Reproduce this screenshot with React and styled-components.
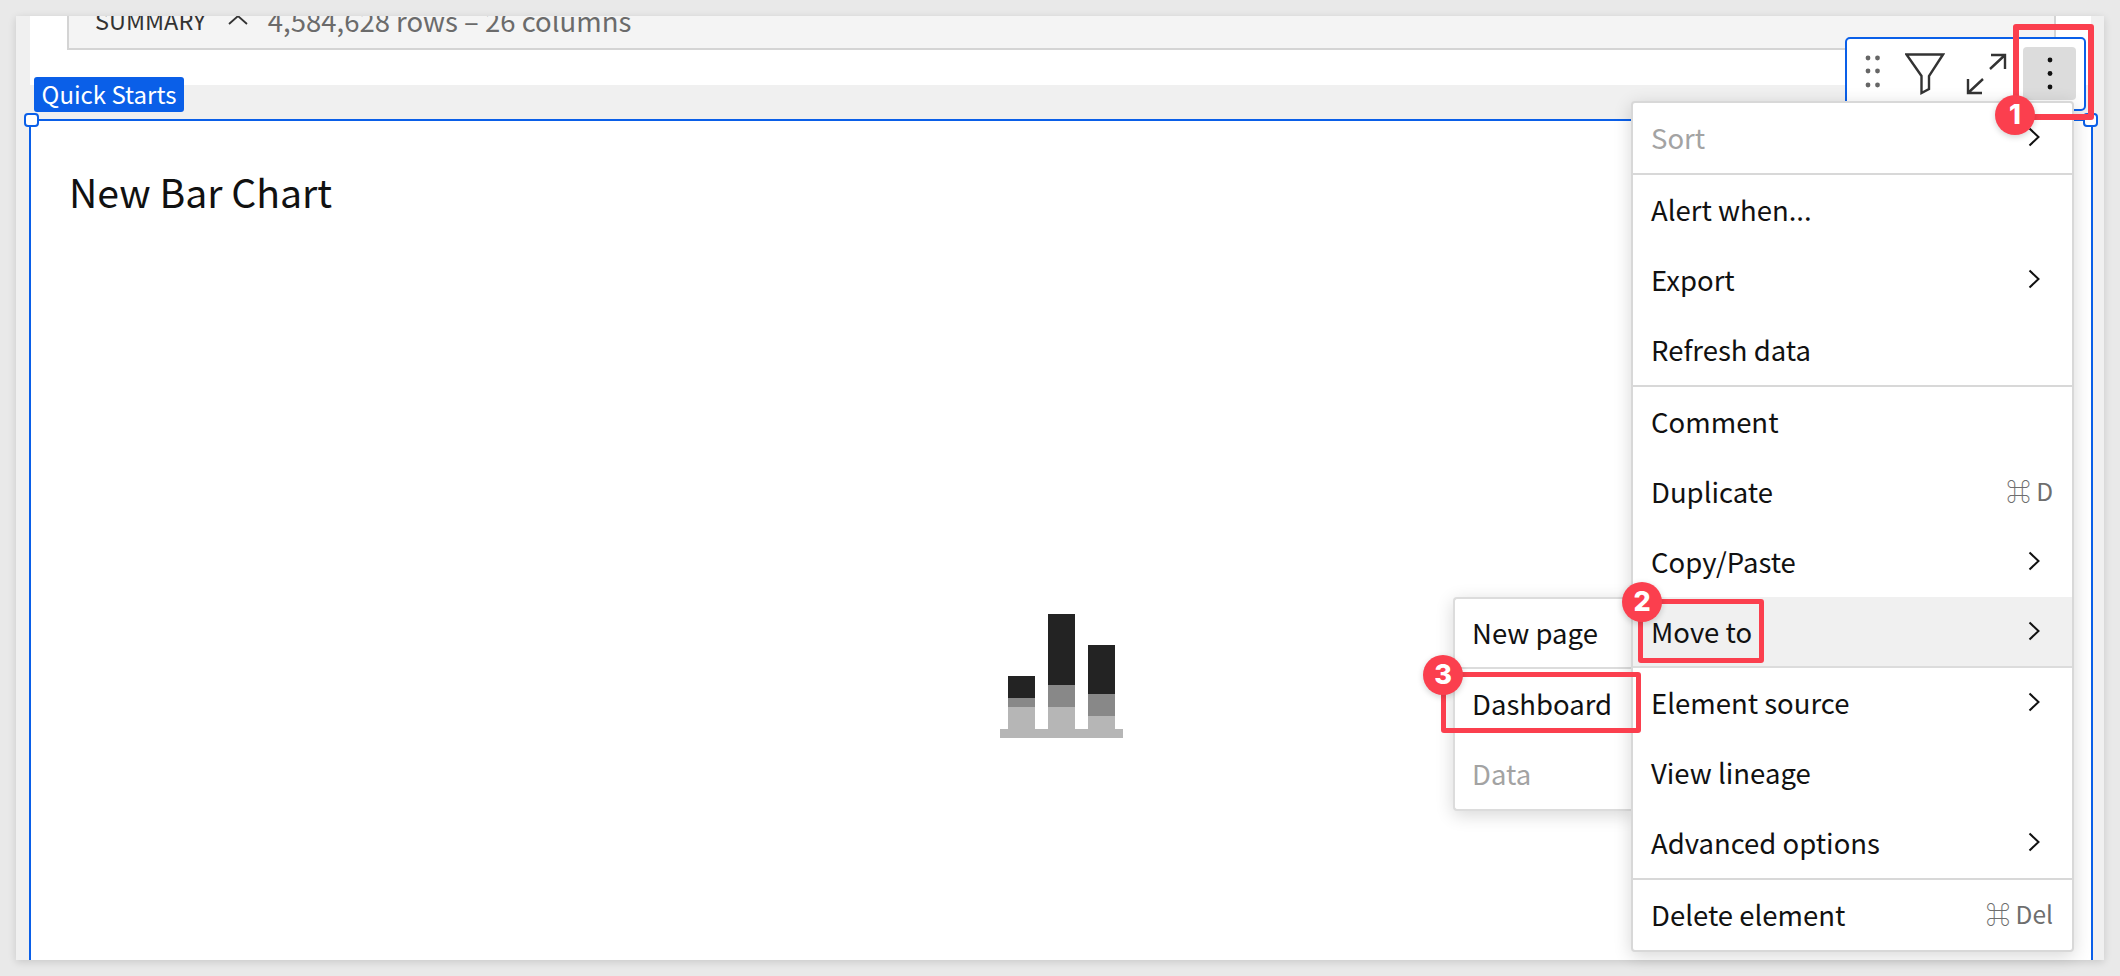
import React from "react";
import styled, { createGlobalStyle } from "styled-components";

const FONT = `"Noto Sans CJK JP", "Noto Sans", "Liberation Sans", sans-serif`;
const RED = "#fb3f4e";
const BLUE = "#0a5fe8";

const Global = createGlobalStyle`
  html, body { margin: 0; padding: 0; background: #e9e9e9; }
  body { font-family: ${FONT}; overflow: hidden; }
  * { box-sizing: border-box; }
`;

const Page = styled.div`
  width: 2120px;
  height: 976px;
  padding: 16px;
`;
const Frame = styled.main`
  position: relative;
  width: 2088px;
  height: 944px;
  background: #f0f0f0;
  box-shadow: 0 2px 8px rgba(0, 0, 0, 0.14);
  display: flex;
  flex-direction: column;
`;
const TopSection = styled.section`
  height: 69px;
  margin: 0 13px 0 14px;
  padding-left: 37px;
  background: #fff;
  flex: none;
`;
const SummaryBar = styled.div`
  width: 1989px;
  height: 34px;
  background: #f4f4f4;
  border-left: 2px solid #d4d4d4;
  border-right: 2px solid #d4d4d4;
  border-bottom: 2px solid #d4d4d4;
  overflow: hidden;
  display: flex;
  align-items: center;
  padding-left: 26px;
  font-size: 24px;
  line-height: 30px;
`;
const SummaryInner = styled.div`
  display: flex;
  align-items: center;
  margin-top: -25px;
`;
const SummaryLabel = styled.span`
  color: #333;
  font-size: 23.5px;
`;
const SummaryChevron = styled.svg`
  width: 20px;
  height: 10px;
  margin: 0 20px 0 22px;
  flex: none;
`;
const SummaryMeta = styled.span`
  color: #6b6b6b;
  font-size: 27.5px;
`;
const TagBand = styled.div`
  height: 34px;
  flex: none;
  padding-left: 18px;
`;
const Tag = styled.div`
  width: 150px;
  height: 35px;
  margin-top: -8px;
  background: ${BLUE};
  color: #fff;
  border-radius: 3px;
  font-size: 24px;
  line-height: 33px;
  text-align: center;
  position: relative;
`;
const ChartPanel = styled.section`
  position: relative;
  flex: 1;
  margin-left: 13px;
  width: 2064px;
  background: #fff;
  border: 2px solid ${BLUE};
  border-bottom: 0;
  display: flex;
  flex-direction: column;
`;
const Handle = styled.span`
  position: absolute;
  top: -8px;
  ${(p) => (p.$side === "left" ? "left: -7px;" : "right: -7px;")}
  width: 15px;
  height: 14px;
  background: #fff;
  border: 2px solid ${BLUE};
  border-radius: 4px;
`;
const Title = styled.h2`
  margin: 46px 0 0 38px;
  font-weight: 400;
  font-size: 39.2px;
  line-height: 48px;
  color: #111;
`;
const EmptyChart = styled.svg`
  align-self: center;
  width: 123px;
  height: 124px;
  margin-top: 399px;
  flex: none;
`;
const Toolbar = styled.div`
  position: absolute;
  left: 1829px;
  top: 21px;
  width: 241px;
  height: 74px;
  background: #fff;
  border: 2px solid ${BLUE};
  border-radius: 5px;
  display: flex;
  align-items: flex-start;
  padding: 8px 8px 0 0;
`;
const ToolIcon = styled.svg`
  flex: none;
  margin-top: ${(p) => p.$mt || 0}px;
  margin-left: ${(p) => p.$ml || 0}px;
`;
const KebabButton = styled.div`
  margin-left: auto;
  width: 53px;
  height: 53px;
  background: #dcdcdc;
  border-radius: 4px;
  display: flex;
  align-items: center;
  justify-content: center;
`;
const Menu = styled.div`
  position: absolute;
  left: 1615px;
  top: 85px;
  width: 443px;
  background: #fff;
  border: 2px solid #d8d8d8;
  border-radius: 4px;
  box-shadow: 0 4px 18px rgba(0, 0, 0, 0.16);
  color: #111;
`;
const SubMenu = styled.div`
  position: absolute;
  left: 1437px;
  top: 581px;
  width: 180px;
  background: #fff;
  border: 2px solid #dcdcdc;
  border-right: 0;
  border-radius: 4px 0 0 4px;
  box-shadow: 0 4px 18px rgba(0, 0, 0, 0.16);
`;
const Group = styled.div`
  &:not(:last-child) {
    border-bottom: 2px solid #d8d8d8;
  }
`;
const Row = styled.div`
  height: ${(p) => p.$h || 70}px;
  padding: 0 20px 2px ${(p) => p.$pl ?? 18}px;
  display: flex;
  align-items: center;
  justify-content: space-between;
  font-size: 27.5px;
  line-height: 36px;
  color: ${(p) => (p.$disabled ? "#a3a3a3" : "#111")};
  background: ${(p) => (p.$active ? "#f0f0f0" : "transparent")};
  border-bottom: ${(p) => (p.$rule ? "2px solid #dcdcdc" : "0")};
`;
const Shortcut = styled.span`
  font-family: ${FONT};
  font-size: 24.5px;
  color: #6e6e6e;
  margin-right: -1px;
`;
const Chevron = styled.svg`
  width: 12px;
  height: 20px;
  flex: none;
  margin-right: 12px;
`;
const Callout = styled.div`
  position: absolute;
  left: ${(p) => p.$x - 16}px;
  top: ${(p) => p.$y - 16}px;
  width: ${(p) => p.$w}px;
  height: ${(p) => p.$h}px;
  border: ${(p) => p.$t || 5}px solid ${RED};
  border-radius: 3px;
`;
const Badge = styled.div`
  position: absolute;
  left: ${(p) => p.$cx - 36}px;
  top: ${(p) => p.$cy - 36}px;
  width: 40px;
  height: 40px;
  border-radius: 50%;
  background: ${RED};
  color: #fff;
  font-family: "Inter", "Liberation Sans", sans-serif;
  font-size: 27px;
  font-weight: 800;
  line-height: 40px;
  text-align: center;
  box-shadow: 0 2px 6px rgba(0, 0, 0, 0.18);
`;

const Arrow = () => (
  <Chevron viewBox="0 0 12 20">
    <path d="M1.5 1.5 L10.5 10 L1.5 18.5" fill="none" stroke="#111" strokeWidth="2" />
  </Chevron>
);

const Item = ({ label, arrow, shortcut, ...rest }) => (
  <Row {...rest}>
    <span>{label}</span>
    {arrow && <Arrow />}
    {shortcut && <Shortcut>{shortcut}</Shortcut>}
  </Row>
);

export default function App() {
  return (
    <Page>
      <Global />
      <Frame>
        <TopSection>
          <SummaryBar>
            <SummaryInner>
              <SummaryLabel>SUMMARY</SummaryLabel>
              <SummaryChevron viewBox="0 0 20 10">
                <path d="M1 9 L10 1 L19 9" fill="none" stroke="#333" strokeWidth="1.8" />
              </SummaryChevron>
              <SummaryMeta>4,584,628 rows – 26 columns</SummaryMeta>
            </SummaryInner>
          </SummaryBar>
        </TopSection>
        <TagBand>
          <Tag>Quick Starts</Tag>
        </TagBand>
        <ChartPanel>
          <Handle $side="left" />
          <Handle $side="right" />
          <Title>New Bar Chart</Title>
          <EmptyChart viewBox="0 0 123 124">
            <rect x="0" y="115" width="123" height="9" fill="#b6b6b6" />
            <rect x="8" y="93" width="27" height="22" fill="#b6b6b6" />
            <rect x="8" y="84" width="27" height="9" fill="#888" />
            <rect x="8" y="62" width="27" height="22" fill="#232323" />
            <rect x="48" y="93" width="27" height="22" fill="#b6b6b6" />
            <rect x="48" y="71" width="27" height="22" fill="#888" />
            <rect x="48" y="0" width="27" height="71" fill="#232323" />
            <rect x="88" y="102" width="27" height="13" fill="#b6b6b6" />
            <rect x="88" y="80" width="27" height="22" fill="#888" />
            <rect x="88" y="31" width="27" height="49" fill="#232323" />
          </EmptyChart>
        </ChartPanel>

        <Toolbar>
          <ToolIcon $ml={15} $mt={5} width="22" height="42" viewBox="0 0 22 42">
            {[6, 19, 33].map((y) =>
              [6, 15.5].map((x) => <circle key={`${x}-${y}`} cx={x} cy={y} r="2.4" fill="#666" />)
            )}
          </ToolIcon>
          <ToolIcon $ml={21} $mt={6} width="40" height="42" viewBox="0 0 40 42">
            <path d="M1.5 1.5 H38 L24 23 V36 L16.5 40 V23 Z" fill="none" stroke="#333" strokeWidth="2.4" strokeLinejoin="miter" />
          </ToolIcon>
          <ToolIcon $ml={21} $mt={6} width="42" height="42" viewBox="0 0 42 42">
            <path d="M25 2 H39 V16 M39 2 L24 16 M2 26 V40 H16 M2 40 L17 26" fill="none" stroke="#333" strokeWidth="2.4" />
          </ToolIcon>
          <KebabButton>
            <svg width="6" height="34" viewBox="0 0 6 34">
              <circle cx="3" cy="3" r="2.4" fill="#111" />
              <circle cx="3" cy="16.5" r="2.4" fill="#111" />
              <circle cx="3" cy="30" r="2.4" fill="#111" />
            </svg>
          </KebabButton>
        </Toolbar>

        <SubMenu>
          <Item label="New page" $h={70} $pl={17} $rule />
          <Item label="Dashboard" $h={70} $pl={17} />
          <Item label="Data" $h={70} $pl={17} $disabled />
        </SubMenu>

        <Menu>
          <Group>
            <Item label="Sort" arrow $disabled />
          </Group>
          <Group>
            <Item label="Alert when..." />
            <Item label="Export" arrow />
            <Item label="Refresh data" />
          </Group>
          <Group>
            <Item label="Comment" />
            <Item label="Duplicate" shortcut="⌘ D" />
            <Item label="Copy/Paste" arrow />
            <Item label="Move to" arrow $active $rule $h={71} />
            <Item label="Element source" arrow />
            <Item label="View lineage" />
            <Item label="Advanced options" arrow />
          </Group>
          <Group>
            <Item label="Delete element" shortcut="⌘ Del" />
          </Group>
        </Menu>

        <Callout $x={2013} $y={24} $w={81} $h={96} $t={6} />
        <Callout $x={1638} $y={599} $w={126} $h={64} />
        <Callout $x={1441} $y={672} $w={200} $h={61} />
        <Badge $cx={2015} $cy={115}>1</Badge>
        <Badge $cx={1642} $cy={602}>2</Badge>
        <Badge $cx={1443} $cy={675}>3</Badge>
      </Frame>
    </Page>
  );
}
